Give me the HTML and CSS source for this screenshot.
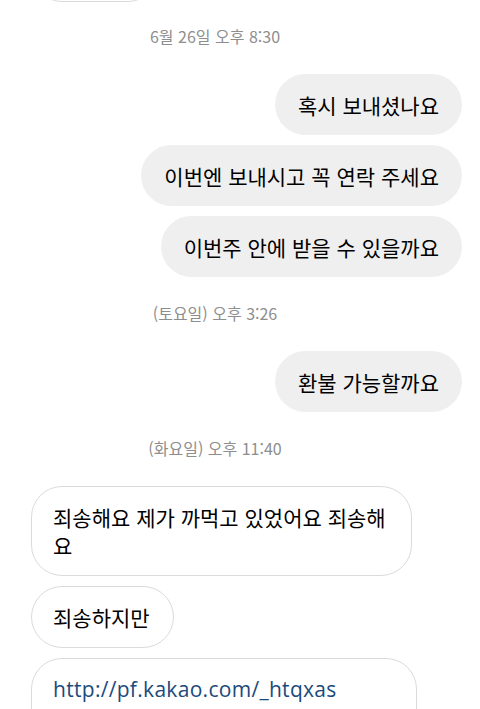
FILE: index.html
```html
<!DOCTYPE html>
<html lang="ko">
<head>
<meta charset="utf-8">
<title>대화</title>
<link rel="stylesheet" href="styles.css">
</head>
<body>
<main class="chat">
  <div class="row in"><div class="bubble in top-cut" aria-hidden="true"></div></div>

  <div class="time first">6월 26일 오후 8:30</div>
  <div class="row out"><div class="bubble out">혹시 보내셨나요</div></div>
  <div class="row out"><div class="bubble out">이번엔 보내시고 꼭 연락 주세요</div></div>
  <div class="row out"><div class="bubble out">이번주 안에 받을 수 있을까요</div></div>

  <div class="time">(토요일) 오후 3:26</div>
  <div class="row out"><div class="bubble out">환불 가능할까요</div></div>

  <div class="time">(화요일) 오후 11:40</div>
  <div class="row in"><div class="bubble in">죄송해요 제가 까먹고 있었어요 죄송해요</div></div>
  <div class="row in"><div class="bubble in">죄송하지만</div></div>
  <div class="row in"><div class="bubble in link"><a class="url" href="#">http://pf.kakao.com/_htqxas</a><div class="preview"></div></div></div>
</main>
</body>
</html>
```

FILE: styles.css
```css
html, body {
  margin: 0;
  padding: 0;
  background: #ffffff;
}

body {
  width: 480px;
  height: 709px;
  overflow: hidden;
  font-family: "Noto Sans CJK KR", "Noto Sans", sans-serif;
  color: #000000;
}

.chat {
  display: flex;
  flex-direction: column;
  padding: 0 18px 0 31px;
}

.row {
  display: flex;
}

.row + .row {
  margin-top: 10px;
}

.row.out {
  justify-content: flex-end;
}

.row.in {
  justify-content: flex-start;
}

.bubble {
  box-sizing: border-box;
  border-radius: 31px;
  line-height: 28px;
  font-size: 21px;
}

.bubble.out {
  background: #efefef;
  padding: 16.5px 23px;
}

.bubble.in {
  background: #ffffff;
  border: 1px solid #dbdbdb;
  padding: 16px 23px 16px 21px;
  max-width: 381px;
}

.bubble.top-cut {
  width: 128px;
  height: 62px;
  margin-top: -60px;
}

.bubble.link {
  width: 386px;
  max-width: 386px;
}

.url {
  display: block;
  color: #1b4a7c;
  text-decoration: none;
  font-family: "Open Sans", "Noto Sans", sans-serif;
  font-size: 21px;
  letter-spacing: 0.3px;
}

.preview {
  height: 60px;
}

.time {
  margin: 26px 0 28px;
  padding-right: 63px;
  text-align: center;
  font-size: 16px;
  line-height: 20px;
  color: #8e8e8e;
}

.time.first {
  margin-top: 24px;
}
```
